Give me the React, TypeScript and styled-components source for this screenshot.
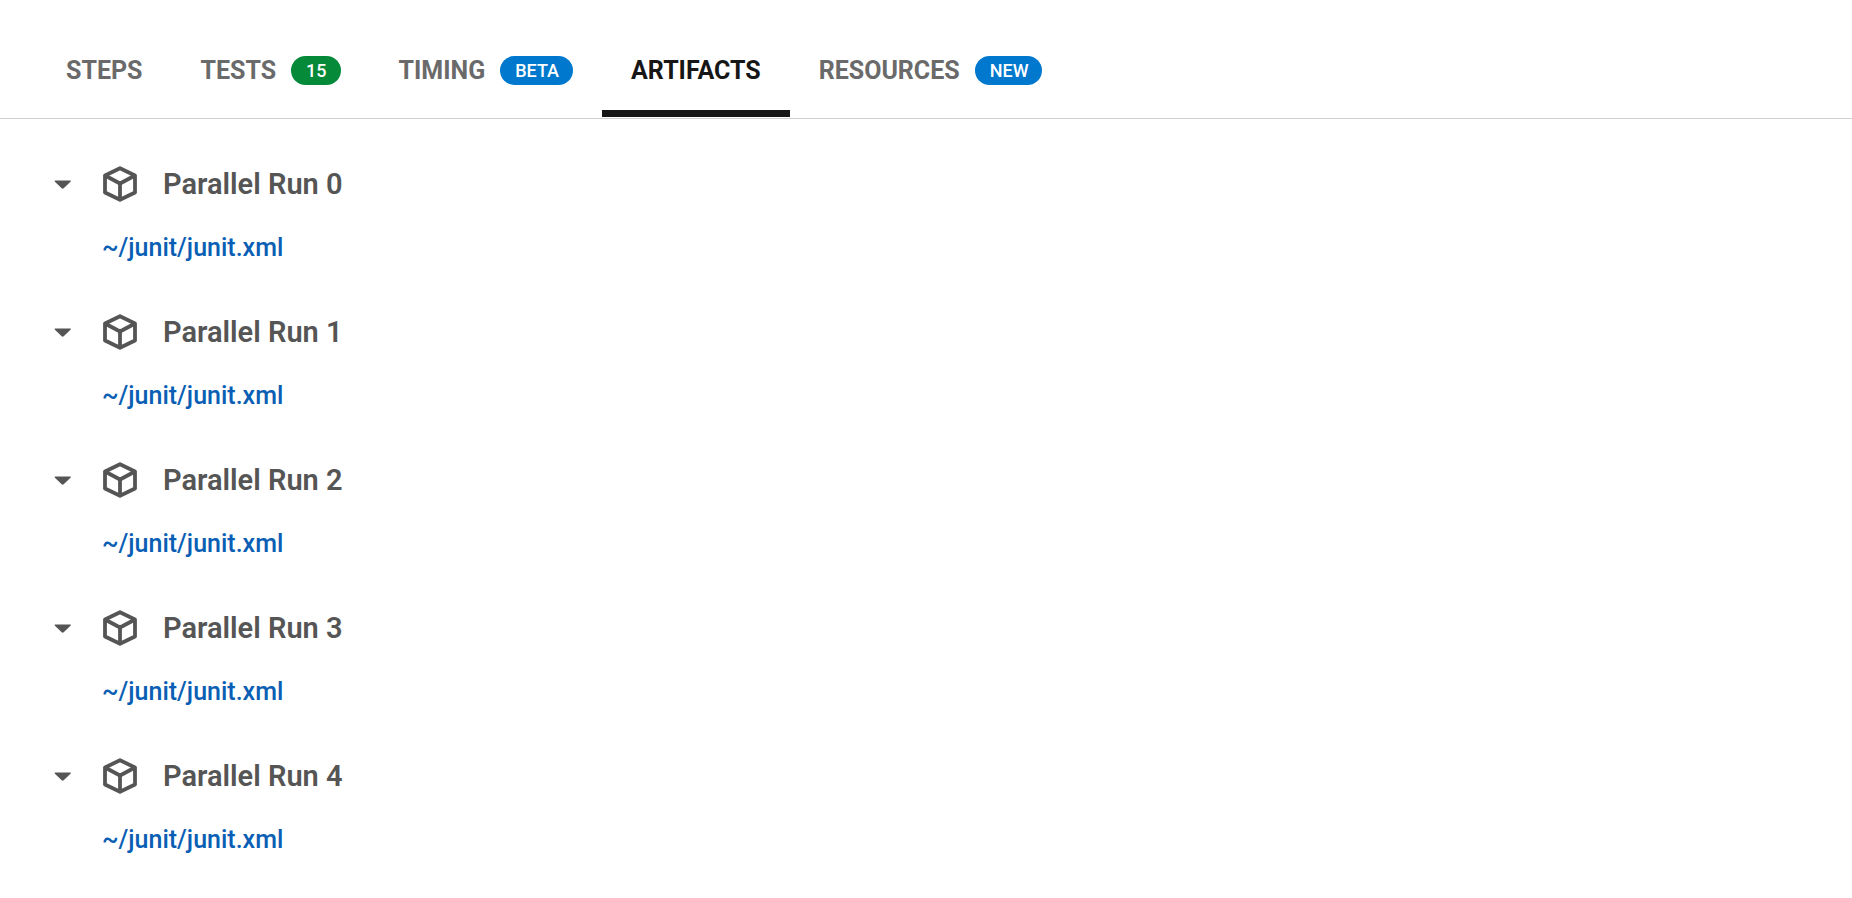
import React, { useState } from "react";
import styled, { createGlobalStyle } from "styled-components";

const GlobalStyle = createGlobalStyle`
  *, *::before, *::after { box-sizing: border-box; }
  body {
    margin: 0;
    background: #fff;
    font-family: Roboto, "Liberation Sans", sans-serif;
  }
`;

const TabBar = styled.nav`
  display: flex;
  padding: 24px 37px 1px;
  border-bottom: 1px solid #d0d0d0;
`;

const Tab = styled.button<{ $active: boolean }>`
  display: flex;
  align-items: center;
  gap: 15px;
  height: 93px;
  padding: 0 29px;
  border: 0;
  border-top: 7px solid transparent;
  border-bottom: 7px solid ${(p) => (p.$active ? "#161616" : "transparent")};
  background: none;
  color: ${(p) => (p.$active ? "#161616" : "#6a6a6a")};
  font: 700 25px/31px Roboto, "Liberation Sans", sans-serif;
  cursor: pointer;
`;

const Badge = styled.span<{ $color: string }>`
  padding: 0 14px 0 15px;
  border-radius: 15px;
  background: ${(p) => p.$color};
  color: #fff;
  font-size: 18px;
  font-weight: 500;
  line-height: 29px;
`;

const Runs = styled.main`
  display: flex;
  flex-direction: column;
  gap: 44px;
  padding: 44px 48px;
`;

const RunHeader = styled.button`
  display: flex;
  align-items: center;
  height: 42px;
  padding: 0;
  border: 0;
  background: none;
  color: #555;
  font: 600 29px/40px Roboto, "Liberation Sans", sans-serif;
  cursor: pointer;
`;

const Caret = styled.svg`
  width: 30px;
  height: 10px;
  margin-right: 24px;
`;

const Cube = styled.svg`
  width: 36px;
  height: 38px;
  margin-right: 25px;
`;

const FileLink = styled.a`
  display: block;
  width: max-content;
  margin: 24px 0 0 54px;
  color: #0a5fb4;
  font-size: 25px;
  font-weight: 500;
  line-height: 38px;
  text-decoration: none;
`;

const tabs = [
  { name: "STEPS" },
  { name: "TESTS", badge: "15", color: "#048a38" },
  { name: "TIMING", badge: "BETA", color: "#0078ce" },
  { name: "ARTIFACTS" },
  { name: "RESOURCES", badge: "NEW", color: "#0078ce" },
];

function Run({ index }: { index: number }) {
  const [open, setOpen] = useState(true);
  return (
    <section>
      <RunHeader aria-expanded={open} onClick={() => setOpen(!open)}>
        <Caret viewBox="0 0 30 10" aria-hidden="true">
          <path d="M7 1.500h15.500q.8.3 0 1.200L15.700 9.300q-1 .9-2 0L6.900 2.700q-.6-.9.100-1.200z" fill="currentColor" />
        </Caret>
        <Cube viewBox="0 0 36 38" fill="none" stroke="currentColor" strokeWidth="3.800" strokeLinejoin="round" aria-hidden="true">
          <path d="M18 3.200 33 10.500v17L18 34.800 3 27.500v-17zM3 10.500 18 18.500l15-8M18 18.500v16.300" />
        </Cube>
        Parallel Run {index}
      </RunHeader>
      {open && <FileLink href="#">~/junit/junit.xml</FileLink>}
    </section>
  );
}

export default function App() {
  const [active, setActive] = useState("ARTIFACTS");
  return (
    <>
      <GlobalStyle />
      <TabBar>
        {tabs.map((t) => (
          <Tab key={t.name} $active={active === t.name} onClick={() => setActive(t.name)}>
            {t.name}
            {t.badge && <Badge $color={t.color}>{t.badge}</Badge>}
          </Tab>
        ))}
      </TabBar>
      <Runs>
        {[0, 1, 2, 3, 4].map((i) => (
          <Run key={i} index={i} />
        ))}
      </Runs>
    </>
  );
}
